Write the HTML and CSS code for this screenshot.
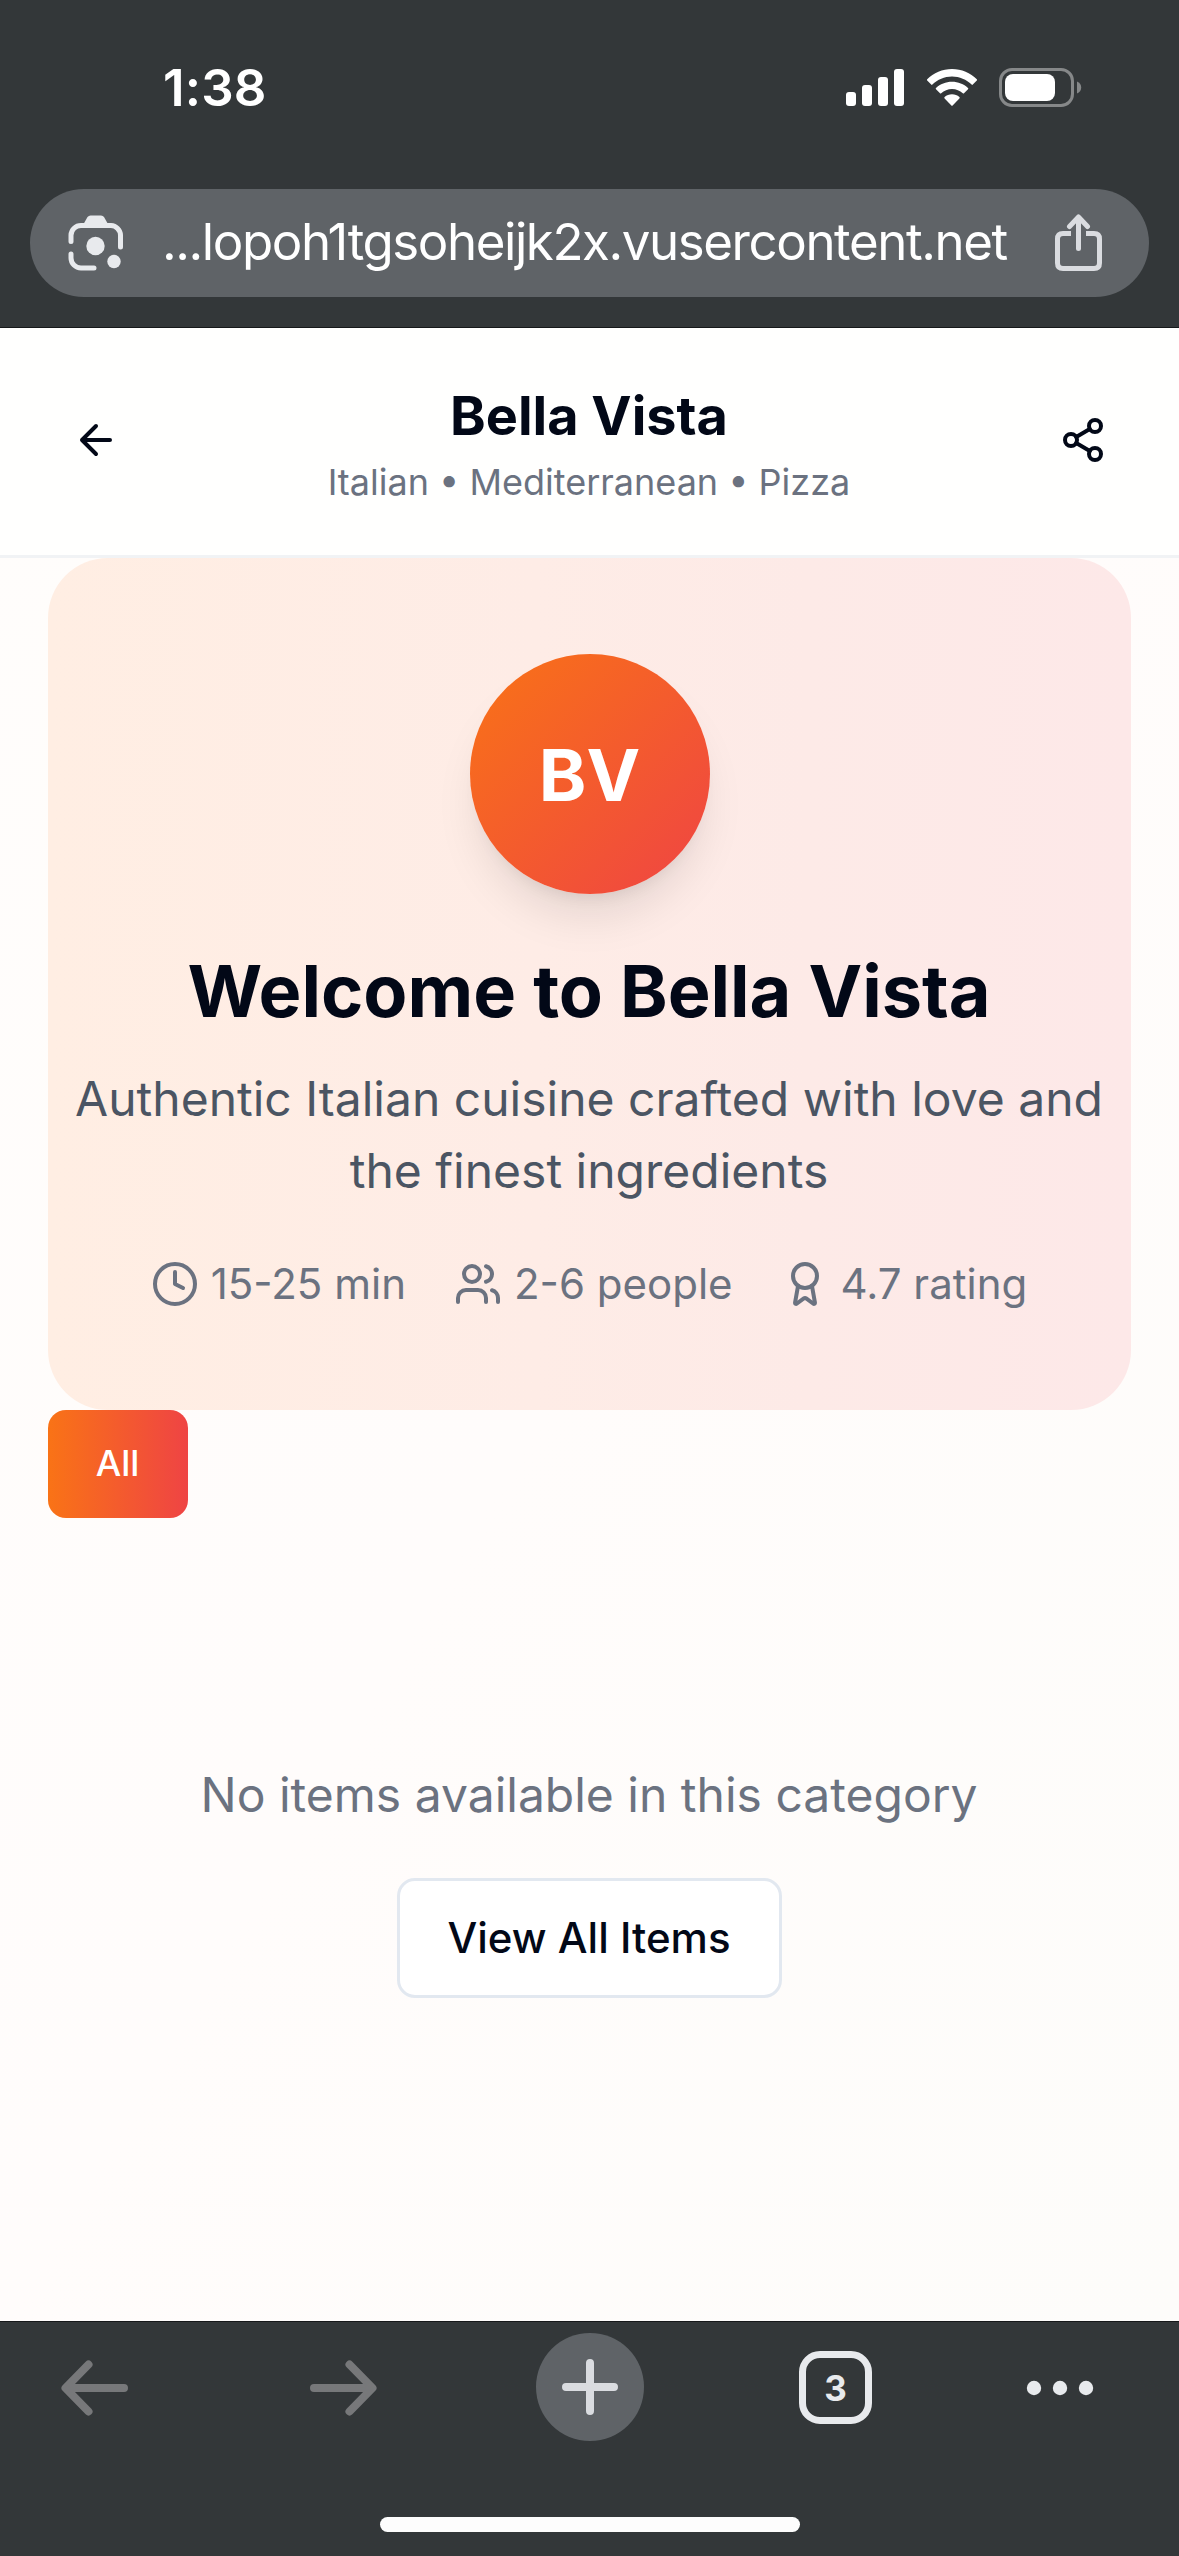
FILE: index.html
```html
<!DOCTYPE html>
<html lang="en">
<head>
<meta charset="utf-8">
<title>Bella Vista</title>
<link rel="stylesheet" href="styles.css">
</head>
<body>
<div class="screen">
  <div class="browser-top">
    <div class="status">
      <span class="time">1:38</span>
      <div class="status-icons">
        <svg class="signal" width="58" height="39" viewBox="0 0 58 39" fill="#fff">
          <rect x="0" y="24" width="10" height="14" rx="3"/><rect x="16" y="17" width="10" height="21" rx="3"/><rect x="32" y="9" width="10" height="29" rx="3"/><rect x="48" y="1" width="10" height="37" rx="3"/>
        </svg>
        <svg class="wifi" width="52" height="39" viewBox="0 0 52 39" fill="#fff">
          <path d="M26 1C16.500 1 7.500 4.800 1.200 11.200q-.7.700 0 1.400l4 4q.6.600 1.200 0C11.500 11.500 18.500 8.500 26 8.500s14.500 3 19.600 8.100q.6.600 1.200 0l4-4q.7-.7 0-1.400C44.500 4.800 35.500 1 26 1z"/>
          <path d="M26 13.700c-6.200 0-11.800 2.300-16 6.200q-.7.700 0 1.400l4 4q.6.600 1.200 0c2.900-2.600 6.600-4.300 10.800-4.300s7.900 1.700 10.800 4.300q.6.600 1.200 0l4-4q.7-.7 0-1.400c-4.200-3.900-9.800-6.200-16-6.200z"/>
          <path d="M26 26.300c-2.800 0-5.400 1-7.400 2.700q-.7.700 0 1.400l6.800 7.200q.6.600 1.200 0l6.800-7.200q.7-.7 0-1.400c-2-1.700-4.600-2.700-7.400-2.700z"/>
        </svg>
        <svg class="battery" width="84" height="39" viewBox="0 0 84 39">
          <rect x="1.500" y="1.500" width="72" height="36" rx="11.500" fill="none" stroke="#868889" stroke-width="3"/>
          <rect x="6" y="6" width="50" height="27" rx="8" fill="#fff"/>
          <path d="M78 13.500c2.600 1 4.200 3.300 4.200 6s-1.600 5-4.200 6z" fill="#868889"/>
        </svg>
      </div>
    </div>
    <div class="address">
      <svg width="56" height="56" viewBox="0 0 56 56">
        <g fill="none" stroke="#e8eaed" stroke-width="5" stroke-linecap="round"><path d="M3 26.500V20A10 10 0 0 1 13 10.500H43A10 10 0 0 1 52.500 20V32"/><path d="M3 39V43A10 10 0 0 0 13 53H26"/></g>
        <path d="M15 10 19.500 2Q20.700.500 22.500.500H33Q35 .500 36 2L40.500 10z" fill="#e8eaed"/>
        <circle cx="27.500" cy="31" r="9.200" fill="#e8eaed"/><circle cx="46" cy="46.500" r="6.700" fill="#e8eaed"/>
      </svg>
      <span class="url">...lopoh1tgsoheijk2x.vusercontent.net</span>
      <svg width="50" height="58" viewBox="0 0 50 58" fill="none" stroke="#dadce0" stroke-width="5" stroke-linecap="round" stroke-linejoin="round">
        <path stroke-linecap="butt" d="M17 19.500H9Q3.500 19.500 3.500 25V49Q3.500 54.500 9 54.500H40Q45.500 54.500 45.500 49V25Q45.500 19.500 40 19.500H32"/><path d="M24.500 34.500V4M15.500 12.500l9-9.500 9 9.500"/>
      </svg>
    </div>
  </div>

  <div class="page">
    <header class="header">
      <svg class="icon" viewBox="0 0 24 24"><path d="m12 19-7-7 7-7M19 12H5"/></svg>
      <div class="titles">
        <h1 class="title">Bella Vista</h1>
        <p class="subtitle">Italian • Mediterranean • Pizza</p>
      </div>
      <svg class="icon" viewBox="0 0 24 24"><circle cx="18" cy="5" r="3"/><circle cx="6" cy="12" r="3"/><circle cx="18" cy="19" r="3"/><path d="m8.590 13.510 6.830 3.980M15.410 6.510 8.590 10.490"/></svg>
    </header>

    <main class="content">
      <section class="hero">
        <div class="logo">BV</div>
        <h2 class="welcome">Welcome to Bella Vista</h2>
        <p class="tagline">Authentic Italian cuisine crafted with love and<br>the finest ingredients</p>
        <div class="facts">
          <div class="fact"><svg class="icon" viewBox="0 0 24 24"><circle cx="12" cy="12" r="10"/><path d="M12 6v6l4 2"/></svg><span>15-25 min</span></div>
          <div class="fact"><svg class="icon" viewBox="0 0 24 24"><path d="M16 21v-2a4 4 0 0 0-4-4H6a4 4 0 0 0-4 4v2"/><circle cx="9" cy="7" r="4"/><path d="M22 21v-2a4 4 0 0 0-3-3.870M16 3.130a4 4 0 0 1 0 7.750"/></svg><span>2-6 people</span></div>
          <div class="fact"><svg class="icon" viewBox="0 0 24 24"><path d="m15.477 12.890 1.515 8.526a.5.500 0 0 1-.810.470l-3.580-2.687a1 1 0 0 0-1.197 0l-3.586 2.686a.5.500 0 0 1-.810-.469l1.514-8.526"/><circle cx="12" cy="8" r="6"/></svg><span>4.7 rating</span></div>
        </div>
      </section>
      <div class="tabs"><button class="tab">All</button></div>
      <section class="empty">
        <p class="empty-text">No items available in this category</p>
        <button class="view-all">View All Items</button>
      </section>
    </main>
  </div>

  <div class="browser-bottom">
    <nav class="toolbar">
      <svg class="back" width="68" height="56" viewBox="0 0 68 56" fill="none" stroke="#77787a" stroke-width="8" stroke-linecap="round" stroke-linejoin="round"><path d="M63 28H5M27.500 4.500 4.500 28l23 23.500"/></svg>
      <svg class="forward" width="68" height="56" viewBox="0 0 68 56" fill="none" stroke="#77787a" stroke-width="8" stroke-linecap="round" stroke-linejoin="round"><path d="M5 28H63M40.500 4.500l23 23.500-23 23.500"/></svg>
      <div class="new-tab"><svg width="56" height="56" viewBox="0 0 56 56" stroke="#dadce0" stroke-width="8" stroke-linecap="round"><path d="M28 4V52M4 28H52"/></svg></div>
      <div class="tab-count">3</div>
      <svg class="more" width="68" height="16" viewBox="0 0 68 16" fill="#e8eaed"><circle cx="8" cy="8" r="7.200"/><circle cx="34" cy="8" r="7.200"/><circle cx="60" cy="8" r="7.200"/></svg>
    </nav>
    <div class="home-indicator"></div>
  </div>
</div>
</body>
</html>
```
FILE: styles.css
```css
* { box-sizing: border-box; margin: 0; padding: 0; }

body {
  font-family: Inter, "Liberation Sans", sans-serif;
  font-optical-sizing: none;
  background: #333739;
}

svg { display: block; flex: none; }

.screen {
  width: 1179px;
  height: 2556px;
  display: flex;
  flex-direction: column;
  overflow: hidden;
}

/* Browser chrome, top */
.browser-top {
  height: 328px;
  flex: none;
  border-bottom: 1px solid #16181a;
  background: #333739;
}

.status {
  height: 189px;
  padding: 58px 96px 0 163px;
  display: flex;
  justify-content: space-between;
  align-items: flex-start;
  color: #fff;
}

.time {
  font-size: 51px;
  line-height: 60px;
  font-weight: 600;
  letter-spacing: 0.2px;
}

.status-icons {
  display: flex;
  padding-top: 10px;
}

.wifi { margin-left: 22px; }
.battery { margin-left: 21px; }

.address {
  height: 108px;
  margin: 0 30px;
  padding: 0 45px 0 38px;
  border-radius: 54px;
  background: #5f6367;
  display: flex;
  align-items: center;
}

.url {
  flex: 1;
  padding: 0 0 2px 38px;
  color: #fff;
  font-size: 51px;
  line-height: 60px;
  letter-spacing: -1.42px;
  white-space: nowrap;
}

/* Page */
.page {
  height: 1993px;
  flex: none;
  background: linear-gradient(to bottom right, #fffdfb, #fffcfb 50%, #fdfcfa);
}

.icon {
  width: 48px;
  height: 48px;
  fill: none;
  stroke: currentColor;
  stroke-width: 2;
  stroke-linecap: round;
  stroke-linejoin: round;
}

.header {
  height: 230px;
  padding: 0 72px 3px;
  border-bottom: 3px solid #f1f3f5;
  background: #fffffe;
  color: #020817;
  display: flex;
  align-items: center;
  justify-content: space-between;
}

.titles {
  padding-right: 1px;
  text-align: center;
}

.title {
  font-size: 54px;
  line-height: 84px;
  font-weight: 700;
}

.subtitle {
  font-size: 36px;
  line-height: 48px;
  color: #6b7280;
}

.content { padding: 0 48px; }

.hero {
  height: 852px;
  padding: 96px 0;
  border-radius: 60px;
  background: linear-gradient(to right, #ffeee3, #feece6 45%, #fdeae7 70%, #fde8e8);
  display: flex;
  flex-direction: column;
  align-items: center;
  text-align: center;
}

.logo {
  width: 240px;
  height: 240px;
  flex: none;
  border-radius: 50%;
  background: linear-gradient(to bottom right, #f97316, #ef4444);
  box-shadow: 0 30px 45px -9px rgba(0, 0, 0, .1), 0 12px 18px -12px rgba(0, 0, 0, .1);
  color: #fff;
  font-size: 72px;
  line-height: 242px;
  font-weight: 700;
}

.welcome {
  margin-top: 49px;
  padding-right: 1px;
  font-size: 72px;
  line-height: 96px;
  font-weight: 700;
  color: #020817;
}

.tagline {
  margin-top: 24px;
  padding-right: 1px;
  font-size: 48px;
  line-height: 72px;
  color: #4b5563;
  white-space: nowrap;
}

.facts {
  margin-top: 47px;
  padding-right: 1px;
  display: flex;
  gap: 48px;
  color: #6b7280;
  font-size: 42px;
  line-height: 60px;
}

.fact {
  display: flex;
  align-items: center;
  gap: 12px;
  white-space: nowrap;
}

.tabs { display: flex; }

button {
  padding: 0 1px 2px 0;
  font-family: inherit;
  font-optical-sizing: none;
  font-weight: 500;
  border-radius: 18px;
}

.tab {
  width: 140px;
  height: 108px;
  border: 0;
  background: linear-gradient(to right, #f97316, #ef4444);
  color: #fff;
  font-size: 36px;
}

.empty {
  padding-top: 241px;
  display: flex;
  flex-direction: column;
  align-items: center;
}

.empty-text {
  padding-right: 1px;
  font-size: 48px;
  line-height: 72px;
  color: #6b7280;
}

.view-all {
  width: 385px;
  height: 120px;
  margin-top: 47px;
  border: 3px solid #e2e8f0;
  background: #fff;
  color: #020817;
  font-size: 42px;
}

/* Browser chrome, bottom */
.browser-bottom {
  flex: 1;
  border-top: 1px solid #16181a;
  background: #333739;
}

.toolbar {
  height: 130px;
  padding: 0 84px 0 61px;
  display: flex;
  align-items: center;
}

.back, .forward, .more { margin-top: 2px; }
.forward { margin-left: 180px; }
.more { margin-left: 154px; }

.new-tab {
  width: 108px;
  height: 108px;
  margin-left: 159px;
  border-radius: 50%;
  background: #5f6367;
  display: grid;
  place-items: center;
}

.tab-count {
  width: 73px;
  height: 73px;
  margin-left: 155px;
  border: 7px solid #e8eaed;
  border-radius: 21px;
  color: #e8eaed;
  font-size: 35px;
  line-height: 61px;
  font-weight: 700;
  text-align: center;
}

.home-indicator {
  width: 420px;
  height: 15px;
  margin: 65px auto 0;
  border-radius: 8px;
  background: #fdfdfd;
}
```
